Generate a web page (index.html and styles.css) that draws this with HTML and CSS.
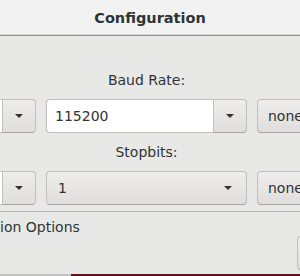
FILE: index.html
```html
<!DOCTYPE html>
<html lang="en">
<head>
  <meta charset="UTF-8">
  <title>Configuration</title>
  <link rel="stylesheet" href="styles.css">
</head>
<body>
  <div class="window">
    <header class="titlebar">
      <h1>Configuration</h1>
    </header>
    <main class="content">
      <div class="form-grid">
        <div class="label"></div>
        <div class="label">Baud Rate:</div>
        <div class="label"></div>

        <div class="entry-combo">
          <span class="entry"></span>
          <span class="arrow-btn"><i class="arrow"></i></span>
        </div>
        <div class="entry-combo">
          <span class="entry">115200</span>
          <span class="arrow-btn"><i class="arrow"></i></span>
        </div>
        <button class="btn">none</button>

        <div class="label label-second"></div>
        <div class="label label-second">Stopbits:</div>
        <div class="label label-second"></div>

        <div class="entry-combo">
          <span class="entry"></span>
          <span class="arrow-btn"><i class="arrow"></i></span>
        </div>
        <div class="combo">
          <span class="combo-text">1</span>
          <i class="arrow"></i>
        </div>
        <button class="btn">none</button>
      </div>

      <div class="separator"></div>

      <div class="section-title">ion Options</div>
      <div class="action-row">
        <button class="btn btn-side"></button>
      </div>
    </main>
    <div class="taskbar">
      <span class="task-left"></span>
      <span class="task-right"></span>
    </div>
  </div>
</body>
</html>
```

FILE: styles.css
```css
:root {
  --bg: #e8e8e7;
  --text: #2e3436;
  --border: #c2beb9;
  --border-dark: #a9a5a0;
}
body {
  margin: 0;
  width: 300px;
  height: 276px;
  overflow: hidden;
  background: var(--bg);
  color: var(--text);
  font-family: "DejaVu Sans", sans-serif;
  font-size: 14px;
}
.window {
  display: flex;
  flex-direction: column;
  height: 276px;
}
.titlebar {
  height: 35px;
  background: #f2f2f2;
  border-bottom: 1px solid #8f8f8b;
  box-shadow: inset 0 -1px 0 #d8d8d6;
  display: flex;
  align-items: center;
  justify-content: center;
}
h1 {
  margin: 0;
  font-size: 14.5px;
  font-weight: bold;
  color: var(--text);
  padding-top: 1px;
}
.content {
  flex: 1;
  padding-top: 36px;
}
.form-grid {
  display: grid;
  grid-template-columns: 200px 201px 80px;
  column-gap: 10px;
  row-gap: 10px;
  margin-left: -164px;
}
.label {
  height: 17px;
  line-height: 17px;
  text-align: center;
}
.label-second {
  margin-top: 1px;
}
.entry-combo {
  display: flex;
  height: 34px;
  box-sizing: border-box;
}
.entry {
  flex: 1;
  background: #fff;
  border: 1px solid var(--border);
  border-right: none;
  border-radius: 4px 0 0 4px;
  padding-left: 8px;
  line-height: 32px;
}
.arrow-btn {
  width: 34px;
  display: flex;
  align-items: center;
  justify-content: center;
  background: linear-gradient(#eeedec, #dfdedc);
  border: 1px solid var(--border);
  border-bottom-color: var(--border-dark);
  border-radius: 0 4px 4px 0;
  box-sizing: border-box;
}
.arrow {
  display: block;
  width: 0;
  height: 0;
  border-left: 4px solid transparent;
  border-right: 4px solid transparent;
  border-top: 4px solid var(--text);
}
.combo {
  height: 34px;
  box-sizing: border-box;
  display: flex;
  align-items: center;
  padding: 0 14px 0 11px;
  background: linear-gradient(#eeedec, #dfdedc);
  border: 1px solid var(--border);
  border-bottom-color: var(--border-dark);
  border-radius: 4px;
}
.combo-text {
  flex: 1;
}
.btn {
  height: 34px;
  box-sizing: border-box;
  padding: 0 10px;
  text-align: left;
  font-family: inherit;
  font-size: 14px;
  color: var(--text);
  background: linear-gradient(#eeedec, #dfdedc);
  border: 1px solid var(--border);
  border-bottom-color: var(--border-dark);
  border-radius: 4px;
}
.separator {
  height: 1px;
  background: #b4b2ae;
  margin-top: 6px;
}
.section-title {
  margin-top: 7px;
  height: 17px;
  line-height: 17px;
}
.action-row {
  display: flex;
  justify-content: flex-end;
  margin-right: -60px;
}
.btn-side {
  width: 63px;
}
.taskbar {
  height: 2px;
  display: flex;
}
.task-left {
  width: 71px;
  background: #c4c4c2;
}
.task-right {
  flex: 1;
  background: #5e141c;
}
```
